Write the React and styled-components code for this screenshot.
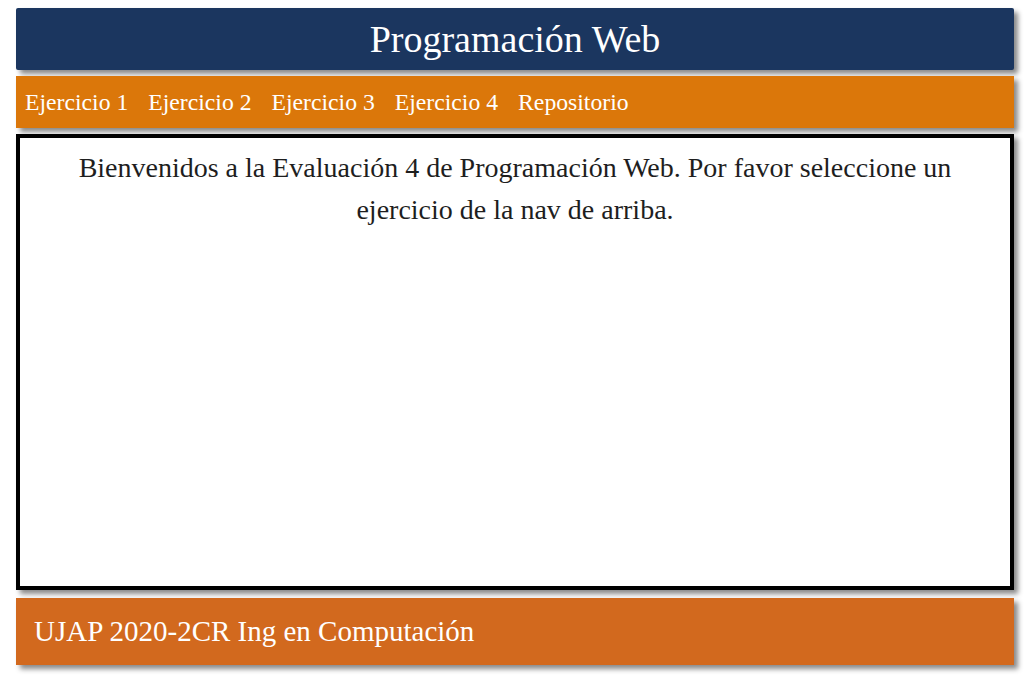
import React from 'react'
import styled, { createGlobalStyle } from 'styled-components'

const Global = createGlobalStyle`
  html, body {
    margin: 0;
    padding: 0;
    background: #ffffff;
    font-family: 'Liberation Serif', 'DejaVu Serif', serif;
  }
`

const Page = styled.div`
  display: flex;
  flex-direction: column;
  padding: 8px 17px 16px 16px;
`

const Header = styled.header`
  height: 62px;
  background: #1b365f;
  color: #ffffff;
  display: flex;
  align-items: center;
  justify-content: center;
  font-size: 38px;
  border-radius: 2px;
  box-shadow: 4px 4px 5px #8a8a8a;
`

const Nav = styled.nav`
  height: 52px;
  margin-top: 6px;
  background: #db770a;
  display: flex;
  align-items: center;
  gap: 20px;
  padding-left: 9px;
  box-shadow: 4px 4px 5px #8a8a8a;
`

const NavLink = styled.a`
  color: #ffffff;
  font-size: 23.7px;
  text-decoration: none;
  cursor: pointer;
`

const Main = styled.main`
  height: 456px;
  box-sizing: border-box;
  margin-top: 6px;
  border: 4px solid #000000;
  background: #ffffff;
  box-shadow: 4px 4px 5px #8a8a8a;
  padding: 9px 40px;
`

const Intro = styled.p`
  margin: 0;
  text-align: center;
  font-size: 28px;
  line-height: 42px;
  color: #1e1e1e;
`

const Footer = styled.footer`
  height: 67px;
  margin-top: 8px;
  background: #d2691e;
  color: #ffffff;
  display: flex;
  align-items: center;
  padding-left: 18px;
  font-size: 29px;
  box-shadow: 4px 4px 5px #8a8a8a;
`

const links = ['Ejercicio 1', 'Ejercicio 2', 'Ejercicio 3', 'Ejercicio 4', 'Repositorio']

export default function App() {
  return (
    <>
      <Global />
      <Page>
        <Header>Programación Web</Header>
        <Nav>
          {links.map(l => (
            <NavLink key={l}>{l}</NavLink>
          ))}
        </Nav>
        <Main>
          <Intro>
            Bienvenidos a la Evaluación 4 de Programación Web. Por favor seleccione un ejercicio de la
            nav de arriba.
          </Intro>
        </Main>
        <Footer>UJAP 2020-2CR Ing en Computación</Footer>
      </Page>
    </>
  )
}
